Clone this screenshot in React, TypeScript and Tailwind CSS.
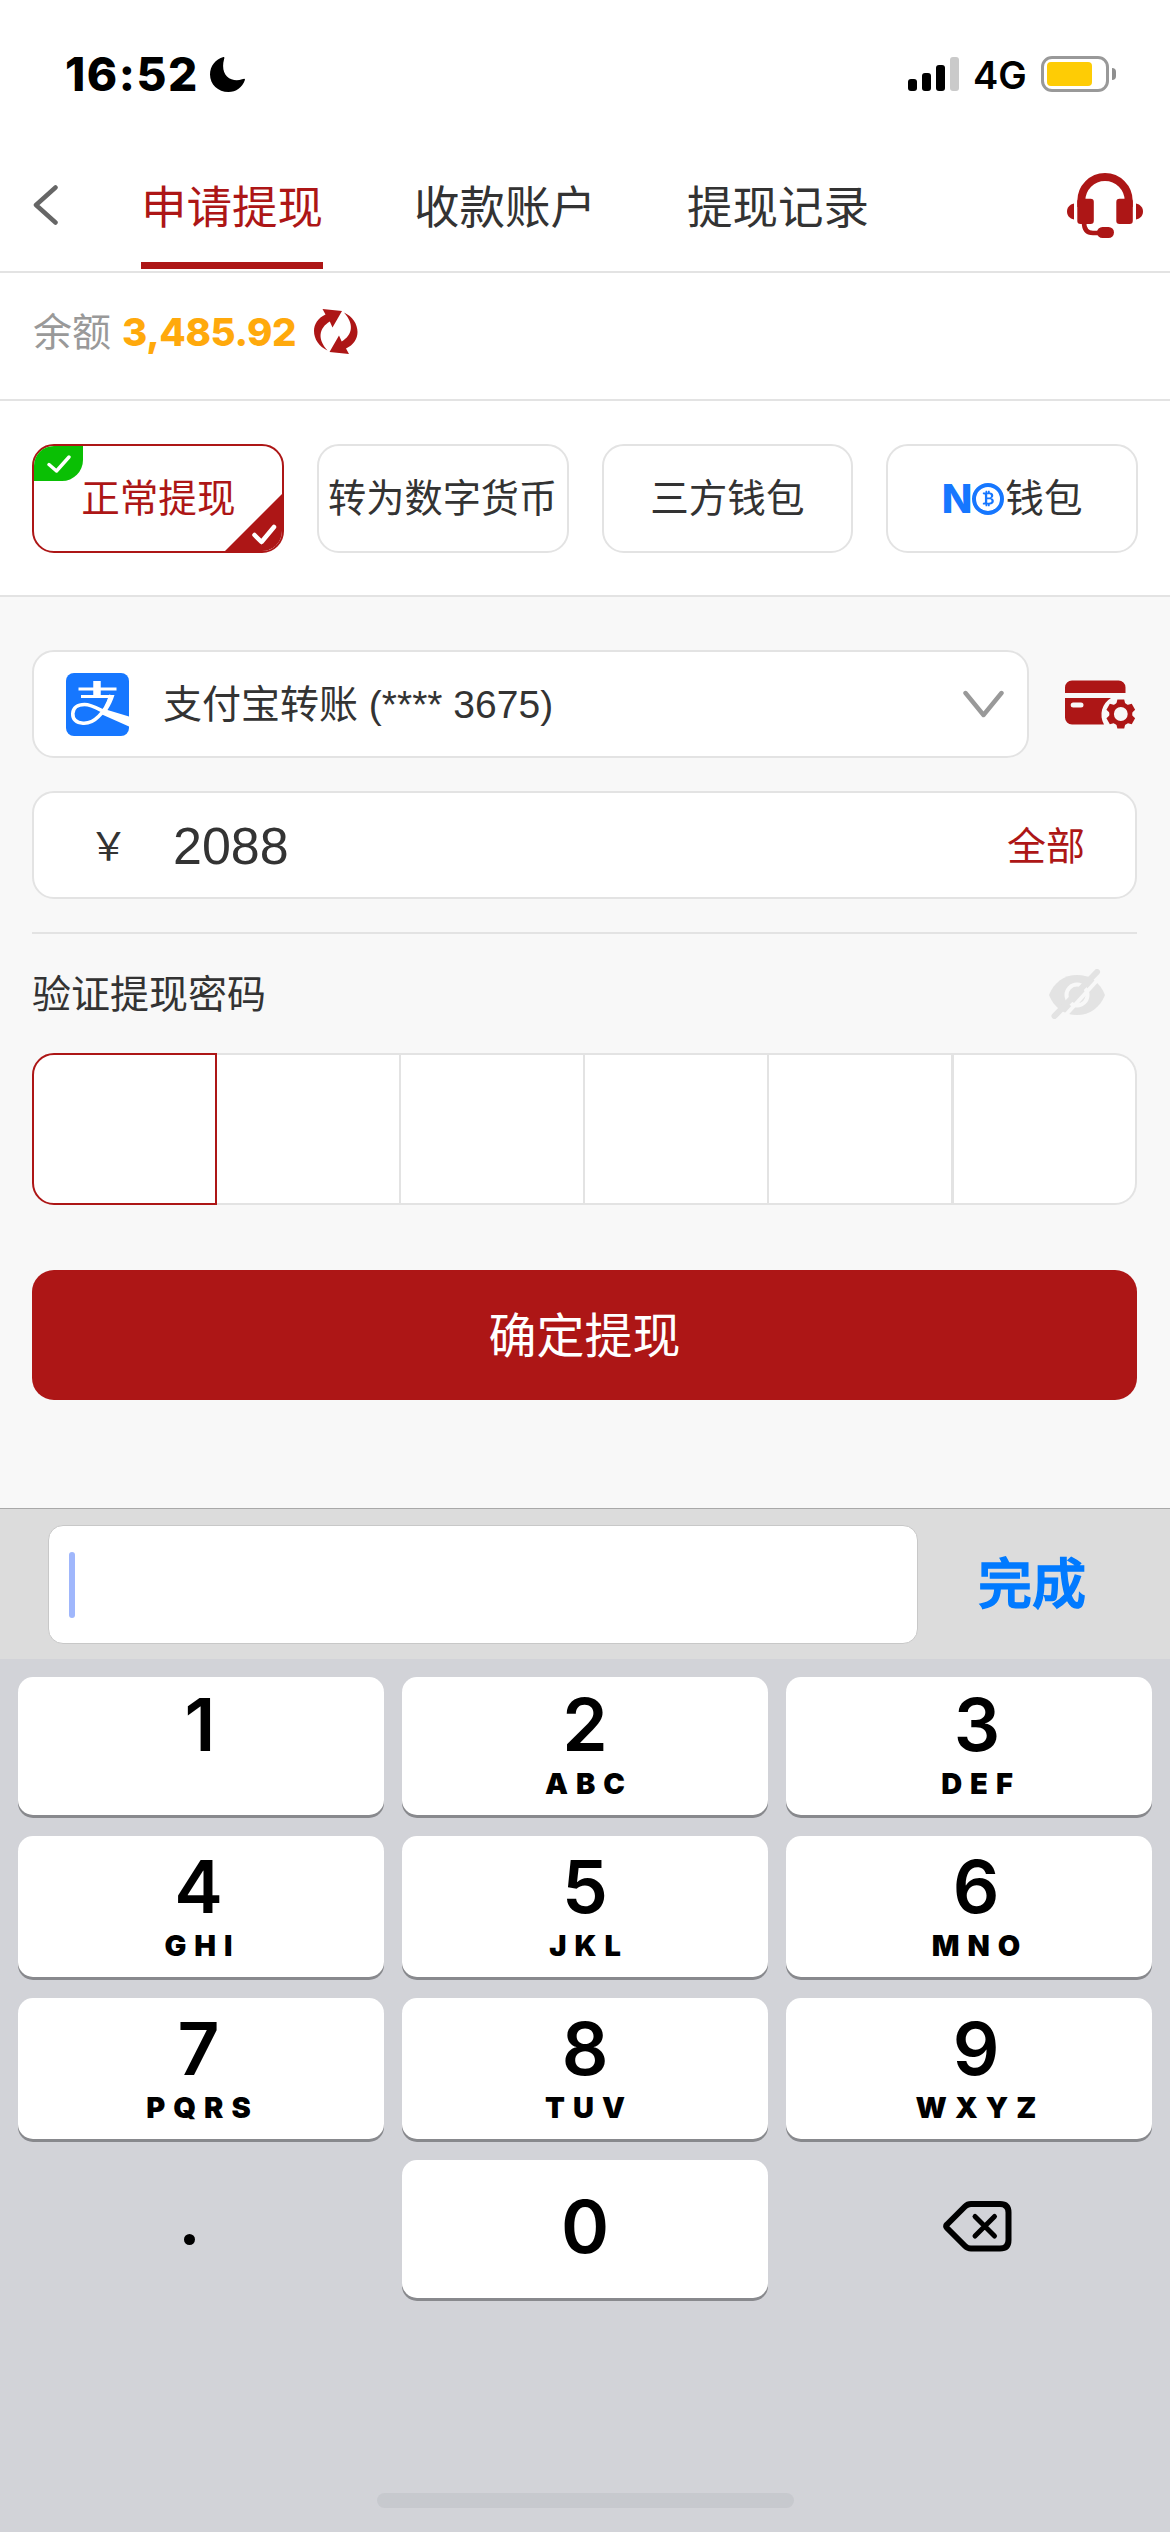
import React from "react";
import { BsCurrencyBitcoin } from "react-icons/bs";

const RED = "#ad1616";

function MoonIcon() {
  return (
    <svg width="35" height="35" viewBox="0 0 35 35">
      <path
        d="M13.5 0C14.8 0 14.4 1.2 14 2.600C12 10 13.500 16 17 19.500C21 23.300 27 24 32 22.300C34 21.700 35.500 21.300 34.800 23.300C32.500 30.500 26 35 18.500 35C8 35 0 27.500 0 17.500C0 9 5.500 2.200 13.500 0Z"
        fill="#000"
      />
    </svg>
  );
}

function HeadsetIcon() {
  return (
    <svg width="76" height="65" viewBox="0 0 76 65" fill={RED}>
      <path d="M14.300 34V28A23.700 24 0 0 1 61.700 28V34" fill="none" stroke={RED} strokeWidth="8" />
      <rect x="10.300" y="25.800" width="16.500" height="25.200" rx="3.200" />
      <rect x="49.300" y="25.800" width="16.500" height="25.200" rx="3.200" />
      <path d="M7 30.500V46.500C2.500 45.500 0 42.500 0 38.500S2.500 31.500 7 30.500Z" />
      <path d="M69 30.500V46.500C73.500 45.500 76 42.500 76 38.500S73.500 31.500 69 30.500Z" />
      <path d="M17 49C17 56 20 60 26 60H36" fill="none" stroke={RED} strokeWidth="4.600" />
      <rect x="30" y="54" width="17" height="11" rx="5.500" />
    </svg>
  );
}

function RefreshIcon() {
  const half =
    "M8.500 0L28 2L18.500 18.500L15.800 12.500C5 19 3 30 13.500 41.500C5 37.500 0 30 0 22C0 15 4 9 11.500 5.500Z";
  return (
    <svg width="44" height="45" viewBox="0 0 44 45" fill={RED}>
      <path d={half} />
      <path d={half} transform="rotate(180 21.75 22.5)" />
    </svg>
  );
}

function AlipayIcon() {
  return (
    <svg width="63" height="63" viewBox="0 0 63 63">
      <rect width="63" height="63" rx="8" fill="#1677ff" />
      <g fill="none" stroke="#fff">
        <path d="M31 8V23" strokeWidth="7.500" />
        <path d="M12.500 16H50.500M15 23.500H46" strokeWidth="3" />
        <path
          d="M45 22C42.500 30 38 38.500 32.500 43.500C27 49 22 50.500 17 50.200C10 49.800 6.500 46 6.800 40.500C7 35 11.500 31.500 18.500 31.500C26 31.500 33 36.500 42 40.500"
          strokeWidth="3.600"
        />
      </g>
      <path d="M43.500 22H48.500C46.500 28 44.500 32.500 41.500 37L63 43.500V53.500L36 41.500Z" fill="#fff" />
    </svg>
  );
}

function CardSettingsIcon() {
  return (
    <svg width="71" height="49" viewBox="0 0 71 49" fill={RED}>
      <path d="M0 13V7.500A7 7 0 0 1 7 .500H53.500A7 7 0 0 1 60.500 7.500V13Z" />
      <path
        fillRule="evenodd"
        d="M0 18H46A19.500 19.500 0 0 0 39 44.500H7A7 7 0 0 1 0 37.500ZM8.200 22.500A2.500 2.500 0 0 0 8.200 27.500H16A2.500 2.500 0 0 0 16 22.500Z"
      />
      <g transform="translate(55.8 34)">
        <circle r="9.200" fill="none" stroke={RED} strokeWidth="4.600" />
        {[0, 60, 120, 180, 240, 300].map((a) => (
          <path key={a} d="M-4.800 -9L-3.400 -14.600H3.400L4.800 -9Z" transform={`rotate(${a})`} />
        ))}
      </g>
    </svg>
  );
}

function EyeOffIcon() {
  return (
    <svg width="56" height="50" viewBox="0 0 56 50">
      <path d="M0 26C5 13.500 15 6 28 6S51 13.500 56 26C51 38.500 41 46 28 46S5 38.500 0 26Z" fill="#e3e3e3" />
      <circle cx="28" cy="26" r="10.500" fill="none" stroke="#f8f8f8" strokeWidth="4" />
      <path d="M53.500 5.500L13 50" stroke="#f8f8f8" strokeWidth="4" />
      <path d="M48 3L5.500 47" stroke="#e3e3e3" strokeWidth="6" strokeLinecap="round" />
    </svg>
  );
}

function BackspaceIcon() {
  return (
    <svg width="69" height="51" viewBox="0 0 69 51" fill="none" stroke="#000" strokeLinejoin="round" strokeLinecap="round">
      <path
        d="M4 23.500L22 5.500Q24.500 3 28 3H57Q65.500 3 65.500 11.500V39Q65.500 47.500 57 47.500H28Q24.500 47.500 22 45L4 27Q2.200 25.200 4 23.500Z"
        strokeWidth="6"
      />
      <path d="M32 15.500L51.500 35M51.500 15.500L32 35" strokeWidth="5" />
    </svg>
  );
}

function StatusBar() {
  return (
    <div className="flex h-[143px] items-start justify-between pt-14 pr-[54px] pl-[65px]">
      <div className="flex h-9 items-center gap-[12px]">
        <span className="w-[133px] font-[Inter,sans-serif] text-[46px] leading-none font-extrabold tracking-[1.500px] text-black">16:52</span>
        <MoonIcon />
      </div>
      <div className="flex h-9 items-center">
        <div className="flex h-[34px] items-end gap-[5px]">
          <div className="h-3 w-[9px] rounded-[3px] bg-black" />
          <div className="h-[18px] w-[9px] rounded-[3px] bg-black" />
          <div className="h-[26px] w-[9px] rounded-[3px] bg-black" />
          <div className="h-[34px] w-[9px] rounded-[3px] bg-[#cacaca]" />
        </div>
        <span className="ml-[14px] w-[52px] pt-0.5 text-center font-[Inter,sans-serif] text-[38px] leading-none font-semibold text-black">
          4G
        </span>
        <div className="ml-4 h-9 w-[68px] rounded-[11px] border-[3px] border-[#999] p-[3px]">
          <div className="h-6 w-[45px] rounded-[4px] bg-[#fecc05]" />
        </div>
        <div className="ml-[3px] h-3 w-1 rounded-r-full bg-[#8f8f8f]" />
      </div>
    </div>
  );
}

function Header() {
  return (
    <div className="box-content flex h-32 items-stretch border-b-2 border-[#e3e3e3] pr-[27px] pl-[33px]">
      <div className="flex w-[108px] items-center pb-1">
        <svg width="25" height="40" viewBox="0 0 25 40" fill="none" stroke="#666" strokeWidth="4.500" strokeLinecap="round" strokeLinejoin="round">
          <path d="M22.500 2.500L3 20L22.500 37.500" />
        </svg>
      </div>
      <div className="flex grow gap-[91px] text-[45.5px] leading-none text-[#333]">
        <div className="relative flex items-center pt-[3px] text-[#ad1616]">
          申请提现
          <div className="absolute inset-x-0 bottom-[2px] h-[7px] bg-[#ad1616]" />
        </div>
        <div className="flex items-center pt-[3px]">收款账户</div>
        <div className="flex items-center pt-[3px]">提现记录</div>
      </div>
      <div className="flex items-center pb-[3px]">
        <HeadsetIcon />
      </div>
    </div>
  );
}

function Methods() {
  const card =
    "relative flex items-center justify-center overflow-hidden rounded-[22px] border-2 border-[#e3e3e3] bg-white pt-px whitespace-nowrap";
  return (
    <div className="border-b-2 border-[#e3e3e3] px-8 pt-[43px] pb-[42px]">
      <div className="grid h-[109px] grid-cols-4 gap-[33px] text-[38.6px] leading-none text-[#333]">
        <div className="relative flex items-center justify-center overflow-hidden rounded-[22px] border-2 border-[#ad1616] bg-white pt-px pl-px whitespace-nowrap text-[#ad1616]">
          正常提现
          <div className="absolute -top-px -left-px flex h-9 w-[50px] items-center justify-center rounded-br-[21px] bg-[#0abf04] pt-0.5 pl-0.5">
            <svg width="24" height="18" viewBox="0 0 24 18" fill="none" stroke="#fff" strokeWidth="3.400" strokeLinecap="round" strokeLinejoin="round">
              <path d="M2 9.500L9.500 16L22 2" />
            </svg>
          </div>
          <svg className="absolute right-0 bottom-0" width="57" height="57" viewBox="0 0 57 57">
            <path d="M57 0V57H0Z" fill={RED} />
            <path d="M29.500 41L36.500 48L49 33" fill="none" stroke="#fff" strokeWidth="4.500" strokeLinecap="round" strokeLinejoin="round" />
          </svg>
        </div>
        <div className={card}>
          <span className="text-[38.2px]">转为数字货币</span>
        </div>
        <div className={card}>三方钱包</div>
        <div className={card}>
          <span className="font-[Inter,sans-serif] text-[40px] font-extrabold text-[#1677ff]">N</span>
          <span className="-mt-px mr-px flex size-8 items-center justify-center rounded-full border-4 border-[#1677ff]">
            <BsCurrencyBitcoin className="size-[19px] text-[#1677ff]" />
          </span>
          钱包
        </div>
      </div>
    </div>
  );
}

function Form() {
  return (
    <div className="flex grow flex-col bg-[#f8f8f8] pt-[53px] pr-[33px] pl-8 text-[#333]">
      <div className="flex items-center">
        <div className="flex h-[108px] w-[997px] items-center rounded-[22px] border-2 border-[#e3e3e3] bg-white pr-[23px] pl-8">
          <AlipayIcon />
          <span className="ml-[34px] grow pt-px text-[39px] leading-none">支付宝转账 (**** 3675)</span>
          <svg width="41" height="28" viewBox="0 0 41 28" fill="none" stroke="#999" strokeWidth="4.400" strokeLinecap="round" strokeLinejoin="round">
            <path d="M2.500 3L20.500 25L38.500 3" />
          </svg>
        </div>
        <div className="ml-9">
          <CardSettingsIcon />
        </div>
      </div>

      <div className="mt-[33px] flex h-[108px] items-center rounded-[22px] border-2 border-[#e3e3e3] bg-white pr-[50px]">
        <span className="w-[139px] pt-0.5 pl-[55px] text-[39px] leading-none">￥</span>
        <span className="grow pt-px text-[52px] leading-none">2088</span>
        <span className="pt-[3px] text-[39px] leading-none text-[#ad1616]">全部</span>
      </div>

      <div className="mt-[33px] h-0.5 bg-[#e3e3e3]" />

      <div className="flex h-[119px] items-center justify-between pr-8">
        <span className="pt-0.5 text-[39px] leading-none">验证提现密码</span>
        <EyeOffIcon />
      </div>

      <div className="grid h-[152px] grid-cols-[185px_184px_184px_184px_185px_1fr]">
        <div className="rounded-l-[22px] border-2 border-[#ad1616] bg-white" />
        <div className="border-y-2 border-r-2 border-[#e3e3e3] bg-white" />
        <div className="border-y-2 border-r-2 border-[#e3e3e3] bg-white" />
        <div className="border-y-2 border-r-2 border-[#e3e3e3] bg-white" />
        <div className="border-y-2 border-r-[3px] border-[#e3e3e3] bg-white" />
        <div className="rounded-r-[22px] border-2 border-l-0 border-[#e3e3e3] bg-white" />
      </div>

      <div className="mt-[65px] flex h-[130px] items-center justify-center rounded-[22px] bg-[#ad1616] pt-[3px] text-5xl leading-none text-white">
        确定提现
      </div>
    </div>
  );
}

function Key({ digit, letters, pos }: { digit: string; letters?: string; pos: string }) {
  return (
    <div className={`flex flex-col items-center rounded-[15px] bg-white text-black shadow-[0_3px_0_#88898d] ${pos}`}>
      <span className="text-[73px] leading-[73px] font-semibold">{digit}</span>
      {letters && <span className="mt-[5px] pl-2 text-[29px] leading-[36px] font-black tracking-[8px]">{letters}</span>}
    </div>
  );
}

function Keyboard() {
  return (
    <div className="flex h-[1024px] flex-col">
      <div className="flex h-[151px] border-t border-[#a9a9a9] bg-[#dcdcdc] pt-4 pl-[48px]">
        <div className="flex h-[119px] w-[870px] items-center rounded-[15px] border border-[#c8c8c8] bg-white pl-5">
          <div className="h-[66px] w-1.5 rounded-full bg-[#a0b7fc]" />
        </div>
        <div className="ml-[60px] flex h-[119px] items-center pb-[7px] font-['Noto_Sans_CJK_SC',sans-serif] text-[54px] leading-none font-medium text-[#007aff] [-webkit-text-stroke:1.5px_#007aff]">
          完成
        </div>
      </div>
      <div className="flex grow flex-col items-center bg-[#d2d3d8] px-[18px] pt-[18px] font-[Inter,sans-serif]">
        <div className="grid w-full grid-cols-3 grid-rows-[138px_141px_141px_138px] gap-x-[18px] gap-y-[21px]">
          <Key digit="1" pos="pt-[11px] pr-0.5" />
          <Key digit="2" letters="ABC" pos="pt-[11px] pr-0" />
          <Key digit="3" letters="DEF" pos="pt-[11px] pl-4" />
          <Key digit="4" letters="GHI" pos="pt-[14px] pr-[5px]" />
          <Key digit="5" letters="JKL" pos="pt-[14px]" />
          <Key digit="6" letters="MNO" pos="pt-[14px] pl-[14px]" />
          <Key digit="7" letters="PQRS" pos="pt-[14px] pr-[5px]" />
          <Key digit="8" letters="TUV" pos="pt-[14px]" />
          <Key digit="9" letters="WXYZ" pos="pt-[14px] pl-[14px]" />
          <div className="flex items-center justify-center pt-[20px] pr-6">
            <div className="size-[11px] rounded-full bg-black" />
          </div>
          <div className="flex items-center justify-center rounded-[15px] bg-white pb-[5px] text-[73px] leading-none font-semibold text-black shadow-[0_3px_0_#88898d]">
            0
          </div>
          <div className="flex items-center justify-center pb-[6px] pl-4">
            <BackspaceIcon />
          </div>
        </div>
        <div className="mt-auto mb-6 h-[15px] w-[417px] rounded-full bg-[#c7c9ce]" />
      </div>
    </div>
  );
}

export default function App() {
  return (
    <div className="flex h-[2532px] w-[1170px] flex-col overflow-hidden bg-white font-['Liberation_Sans','Noto_Sans_CJK_SC',sans-serif]">
      <StatusBar />
      <Header />
      <div className="flex h-[128px] items-center border-b-2 border-[#e3e3e3] pb-[10px] pl-[33px]">
        <span className="pt-0.5 text-[39px] leading-none text-[#999]">余额</span>
        <span className="ml-[11px] w-[174px] pt-0.5 font-[Inter,sans-serif] text-[38.5px] leading-none font-extrabold tracking-[-0.4px] text-[#ffa90c]">
          3,485.92
        </span>
        <div className="ml-[18px]">
          <RefreshIcon />
        </div>
      </div>
      <Methods />
      <Form />
      <Keyboard />
    </div>
  );
}
